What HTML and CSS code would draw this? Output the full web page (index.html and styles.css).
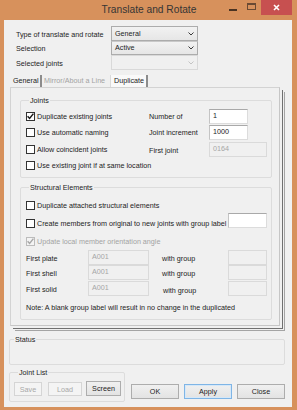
FILE: index.html
```html
<!DOCTYPE html>
<html>
<head>
<meta charset="utf-8">
<title>Translate and Rotate</title>
<link rel="stylesheet" href="styles.css">
</head>
<body>
<div class="window">
  <div class="titlebar">
    <div class="tb-left"></div>
    <div class="title">Translate and Rotate</div>
    <div class="controls">
      <span class="ctl-min"></span>
      <span class="ctl-max"></span>
      <span class="ctl-close"><svg width="7" height="7" viewBox="0 0 7 7"><path d="M1 1L6 6M6 1L1 6" stroke="#fff" stroke-width="1.6"/></svg></span>
    </div>
  </div>
  <div class="client">
    <div class="topform">
      <div class="lbl">Type of translate and rotate</div>
      <div class="select r1"><span>General</span><svg class="chev" width="6" height="4" viewBox="0 0 6 4"><path d="M0.5 0.5L3 3L5.5 0.5" fill="none" stroke="#3a3a3a" stroke-width="1"/></svg></div>
      <div class="lbl">Selection</div>
      <div class="select r2"><span>Active</span><svg class="chev" width="6" height="4" viewBox="0 0 6 4"><path d="M0.5 0.5L3 3L5.5 0.5" fill="none" stroke="#3a3a3a" stroke-width="1"/></svg></div>
      <div class="lbl">Selected joints</div>
      <div class="select r3 disabled"><span></span><svg class="chev" width="6" height="4" viewBox="0 0 6 4"><path d="M0.5 0.5L3 3L5.5 0.5" fill="none" stroke="#c4c4c4" stroke-width="1"/></svg></div>
    </div>

    <div class="tabs">
      <div class="tab t-general">General</div>
      <div class="tab t-mirror">Mirror/About a Line</div>
      <div class="tab t-dup">Duplicate</div>
    </div>

    <div class="panel">
      <fieldset class="group g-joints">
        <legend>Joints</legend>
        <div class="jgrid">
          <label class="chk"><span class="box checked"><svg width="9" height="9" viewBox="0 0 9 9"><path d="M1.6 4.3L3.6 6.4L7.4 1.6" fill="none" stroke="#1a1a1a" stroke-width="1.5"/></svg></span>Duplicate existing joints</label>
          <div class="mid">Number of</div>
          <div class="inp w39"><span>1</span></div>

          <label class="chk"><span class="box"></span>Use automatic naming</label>
          <div class="mid">Joint increment</div>
          <div class="inp w39"><span>1000</span></div>

          <label class="chk"><span class="box"></span>Allow coincident joints</label>
          <div class="mid mid-low">First joint</div>
          <div class="inp w58 dis"><span>0164</span></div>

          <label class="chk span3"><span class="box"></span>Use existing joint if at same location</label>
        </div>
      </fieldset>

      <fieldset class="group g-struct">
        <legend>Structural Elements</legend>
        <div class="srow ra">
          <label class="chk"><span class="box"></span>Duplicate attached structural elements</label>
        </div>
        <div class="srow rb">
          <label class="chk clip"><span class="box"></span><span class="cliptext">Create members from original to new joints with group label</span></label>
          <div class="inp w39"></div>
        </div>
        <div class="srow rc">
          <label class="chk dis-chk"><span class="box checked"><svg width="9" height="9" viewBox="0 0 9 9"><path d="M1.6 4.3L3.6 6.4L7.4 1.6" fill="none" stroke="#a8a8a8" stroke-width="1.5"/></svg></span>Update local member orientation angle</label>
        </div>
        <div class="srow rd">
          <div class="flbl">First plate</div>
          <div class="inp w61 dis"><span>A001</span></div>
          <div class="wg">with group</div>
          <div class="inp w39 dis push"></div>
        </div>
        <div class="srow re">
          <div class="flbl">First shell</div>
          <div class="inp w61 dis"><span>A001</span></div>
          <div class="wg">with group</div>
          <div class="inp w39 dis push"></div>
        </div>
        <div class="srow rf">
          <div class="flbl">First solid</div>
          <div class="inp w61 dis"><span>A001</span></div>
          <div class="wg wg-low">with group</div>
          <div class="inp w39 dis push"></div>
        </div>
        <div class="note">Note: A blank group label will result in no change in the duplicated</div>
      </fieldset>
    </div>

    <fieldset class="group g-status">
      <legend>Status</legend>
    </fieldset>

    <div class="bottom">
      <fieldset class="group g-jlist">
        <legend>Joint List</legend>
        <div class="jbtns">
          <button class="btn b-save" disabled>Save</button>
          <button class="btn b-load" disabled>Load</button>
          <button class="btn b-screen">Screen</button>
        </div>
      </fieldset>
      <div class="mainbtns">
        <button class="btn big">OK</button>
        <button class="btn big default">Apply</button>
        <button class="btn big">Close</button>
      </div>
    </div>
  </div>
</div>
</body>
</html>
```
FILE: styles.css
```css
* { box-sizing: border-box; }
html, body { margin: 0; padding: 0; }
body {
  width: 297px;
  height: 410px;
  background: #d7915c;
  font-family: "Liberation Sans", Arial, sans-serif;
  font-size: 7.2px;
  color: #1c1c1c;
  overflow: hidden;
}
.window { width: 297px; height: 410px; display: flex; flex-direction: column; }

/* title bar */
.titlebar {
  height: 20px;
  display: grid;
  grid-template-columns: 1fr auto 1fr;
  align-items: start;
}
.title {
  font-size: 10.2px;
  color: #353535;
  line-height: 20px;
  padding-left: 1px;
}
.controls { display: flex; justify-content: flex-end; align-items: flex-start; }
.ctl-min { width: 8px; height: 2px; background: #4a3322; margin-top: 9px; margin-right: 10px; }
.ctl-max { width: 9px; height: 7px; border: 1px solid #6a4a33; border-top-width: 2px; margin-top: 3px; margin-right: 5px; }
.ctl-close {
  width: 31px; height: 15px; background: #c75050;
  display: flex; align-items: center; justify-content: center;
  margin-right: 5px;
}

/* client */
.client {
  margin: 0 5px 3px 4px;
  height: 387px;
  background: #f0f0f0;
  display: flex;
  flex-direction: column;
}

.topform {
  margin-top: 6px;
  padding-left: 12px;
  display: grid;
  grid-template-columns: 95px 87px;
  grid-template-rows: 15px 14px 15px;
  align-items: center;
}
.lbl { line-height: 9px; padding-top: 1px; }
.select {
  height: 100%;
  border: 1px solid #acacac;
  background: linear-gradient(#f2f2f2, #e6e6e6);
  display: flex;
  align-items: center;
  justify-content: space-between;
  padding: 0 3px 0 3px;
  line-height: 9px;
}
.select span { padding-bottom: 1px; }
.select.r2 { border-top-color: #c9c9c9; }
.select.disabled { background: #f0f0f0; border-color: #d9d9d9; }

/* tabs */
.tabs {
  margin-top: 5px;
  margin-left: 6px;
  height: 12px;
  display: flex;
  align-items: stretch;
}
.tab { line-height: 12px; }
.t-general { width: 32px; padding-left: 3px; border-right: 2px solid #8c8c8c; }
.t-mirror { width: 68px; padding-left: 2px; color: #a3a3a3; }
.t-dup {
  width: 38px; padding-left: 3px;
  background: #f9f9f9;
  border-left: 1px solid #dadada;
  border-right: 2px solid #8c8c8c;
}

/* panel */
.panel {
  margin-left: 6px;
  width: 270px;
  border: 1px solid #d3d3d3;
  border-right-color: #c6c6c6;
  border-bottom-color: #c6c6c6;
  padding: 0 7px 5px 9px;
  box-shadow: 2px 2px 0 0 #f0f0f0, 3px 3px 0 0 #707070, 4px 4px 0 0 #f0f0f0, 5px 5px 0 0 #a4a4a4;
}

fieldset.group {
  margin: 0;
  border: 1px solid #dcdcdc;
  border-radius: 2px;
  min-width: 0;
}
fieldset.group legend {
  padding: 0 1px;
  margin-left: 3px;
  line-height: 9px;
  font-size: 7.2px;
}

fieldset.g-joints { margin-top: 8px; padding: 3px 4px 4px 5px; }
.jgrid {
  display: grid;
  grid-template-columns: 123px 1fr auto;
  grid-template-rows: 16px 17px 16px 16px;
  align-items: center;
}
.span3 { grid-column: 1 / 4; }
.mid { line-height: 9px; }
.mid-low { padding-top: 3px; }

.chk { display: flex; align-items: center; line-height: 9px; white-space: nowrap; }
.box {
  width: 9px; height: 9px;
  border: 1px solid #333;
  background: #fff;
  margin-right: 2px;
  flex: none;
  position: relative;
}
.box svg { position: absolute; left: -1px; top: -1px; }
.dis-chk { color: #a3a3a3; }
.dis-chk .box { border-color: #bcbcbc; background: #f4f4f4; }

.inp {
  flex: none;
  height: 15px;
  border: 1px solid #acacac;
  border-color: #a9a9a9 #dcdcdc #dcdcdc #c4c4c4;
  background: #fff;
  padding: 2px 2px 0 3px;
  line-height: 8px;
}
.jgrid .inp { align-self: center; }
.inp.dis { background: #f0f0f0; border: 1px solid #dadada; color: #a6a6a6; }
.w39 { width: 39px; }
.w58 { width: 58px; }
.w61 { width: 61px; }

fieldset.g-struct { margin-top: 5px; padding: 5px 4px 7px 5px; }
.srow { display: flex; align-items: center; }
.ra { height: 16px; }
.rb { height: 20px; align-items: flex-start; }
.rb .clip { margin-top: 6px; flex: 0 0 202px; width: 202px; min-width: 0; overflow: hidden; }
.rb .cliptext { white-space: nowrap; }
.rb .inp { margin-left: auto; }
.rc { height: 16px; }
.rd { height: 16px; }
.re { height: 15px; }
.rf { height: 16px; }
.flbl { width: 62px; flex: none; padding-top: 2px; line-height: 9px; }
.wg { margin-left: 13px; padding-top: 2px; line-height: 9px; }
.wg-low { margin-left: 14px; padding-top: 4px; }
.push { margin-left: auto; }
.note { padding-top: 7px; line-height: 9px; }

/* status */
fieldset.g-status {
  margin: 9px 0 0 5px;
  width: 276px;
  height: 30px;
  padding: 0;
}
fieldset.g-status legend { margin-left: 4px; }

/* bottom */
.bottom { display: flex; align-items: flex-end; margin-top: 3px; margin-left: 5px; }
fieldset.g-jlist { width: 116px; padding: 4px 3px 5px 4px; }
fieldset.g-jlist legend { margin-left: 4px; }
.jbtns { display: flex; align-items: flex-end; }
.btn {
  font-family: "Liberation Sans", Arial, sans-serif;
  font-size: 7.2px;
  height: 15px;
  padding: 0;
  border: 1px solid #adadad;
  background: linear-gradient(#f0f0f0, #e3e3e3);
  color: #1c1c1c;
  line-height: 13px;
  border-radius: 0;
}
.btn:disabled { color: #a8a8a8; border-color: #d5d5d5; background: #f4f4f4; }
.b-save { width: 28px; height: 14px; }
.b-load { width: 34px; height: 14px; margin-left: 6px; }
.b-screen { width: 35px; margin-left: 4px; }
.mainbtns { display: flex; gap: 5px; margin-left: 6px; margin-bottom: 3px; }
.big { width: 48px; }
.default { border-color: #7fb5e6; box-shadow: inset 0 0 0 1px #d6e8f8; }
```
